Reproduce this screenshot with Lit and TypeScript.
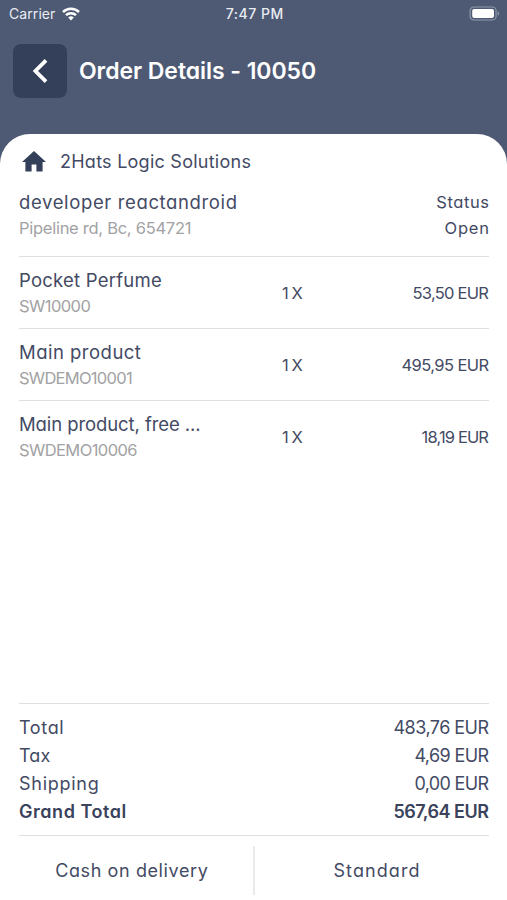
import { LitElement, html, css } from "lit";
import { customElement } from "lit/decorators.js";
import { styleMap } from "lit/directives/style-map.js";

/** A label together with its tracking in pixels. */
type Label = [text: string, tracking: number];

interface Product { name: Label; sku: Label; price: Label; }
interface Amount { label: Label; value: Label; grand?: boolean; }

const products: Product[] = [
  { name: ["Pocket Perfume", 0.23], sku: ["SW10000", -0.56], price: ["53,50 EUR", -0.72] },
  { name: ["Main product", 0.48], sku: ["SWDEMO10001", -0.72], price: ["495,95 EUR", -0.6] },
  { name: ["Main product, free ...", -0.09], sku: ["SWDEMO10006", -0.58], price: ["18,19 EUR", -0.86] },
];

const amounts: Amount[] = [
  { label: ["Total", 0.65], value: ["483,76 EUR", -0.54] },
  { label: ["Tax", 0.1], value: ["4,69 EUR", -0.63] },
  { label: ["Shipping", 0.72], value: ["0,00 EUR", -0.67] },
  { label: ["Grand Total", 0.55], value: ["567,64 EUR", -0.5], grand: true },
];

const label = ([text, tracking]: Label, cls = "") => html`<span
  class="label ${cls}"
  style=${styleMap({ letterSpacing: `${tracking}px`, marginRight: `${-tracking}px` })}
>${text}</span>`;

@customElement("app-root")
export class AppRoot extends LitElement {
  static styles = css`
    :host {
      display: flex;
      flex-direction: column;
      box-sizing: border-box;
      height: 900px;
      background: #4e5a74;
      color: #434a64;
      font-family: Inter, "Open Sans", sans-serif;
      font-feature-settings: "cv11";
      font-size: 18px;
      line-height: 26px;
    }
    .label { white-space: pre; }
    .status-bar {
      display: grid;
      grid-template-columns: 1fr auto 1fr;
      align-items: center;
      height: 27px;
      padding: 0 7px 0 9px;
      color: #e9ecf2;
      font-size: 14px;
      font-feature-settings: normal;
    }
    .carrier { display: flex; align-items: center; gap: 7px; }
    .time { font-weight: 500; }
    .battery { justify-self: end; }
    svg { display: block; flex: none; }
    .title-bar {
      display: flex;
      align-items: center;
      gap: 12px;
      height: 107px;
      box-sizing: border-box;
      padding: 0 13px 19px;
      color: #fff;
    }
    .back {
      display: grid;
      place-items: center;
      width: 54px;
      height: 54px;
      padding: 0;
      border: 0;
      border-radius: 8px;
      background: #344059;
    }
    h1 { margin: 0; font-size: 23px; font-weight: 600; line-height: 30px; }
    .sheet {
      flex: 1;
      display: flex;
      flex-direction: column;
      padding: 14px 18px 0 19px;
      border-radius: 30px 30px 0 0;
      background: #fff;
    }
    .store { display: flex; align-items: center; gap: 14px; height: 27px; padding-left: 3px; }
    .customer {
      display: flex;
      justify-content: space-between;
      height: 67px;
      margin-top: 14px;
      border-bottom: 1px solid #dedfe2;
    }
    .stack { display: flex; flex-direction: column; }
    .end { align-items: flex-end; }
    .name { font-size: 18.5px; }
    .sku { font-size: 16.5px; color: #a2a2a4; }
    .small { font-size: 16.5px; }
    .product {
      display: grid;
      grid-template-columns: 263px 1fr auto;
      align-items: center;
      height: 71px;
      border-bottom: 1px solid #dedfe2;
    }
    .product:last-of-type { border-bottom-color: transparent; }
    .product .stack { padding-top: 1px; }
    .amounts {
      margin-top: auto;
      padding: 10px 0 9px;
      border: solid #dedfe2;
      border-width: 1px 0;
    }
    .amount { display: flex; justify-content: space-between; height: 28px; line-height: 28px; }
    .grand { font-weight: 600; color: #3a425c; }
    .methods { display: flex; align-items: center; height: 64px; }
    .method { flex: 1; display: flex; justify-content: center; padding: 6px 9px 0 0; }
    .rule + .method { padding: 6px 0 0 9px; }
    .rule { width: 2px; height: 49px; margin-top: 4px; background: #e9eaec; }
  `;

  render() {
    return html`
      <div class="status-bar">
        <div class="carrier">
          ${label(["Carrier", 0.08])}
          <svg width="18" height="14" viewBox="0 0 18 14" fill="none" stroke="#fff" stroke-width="2.5">
            <path d="M1 5a11.4 11.4 0 0 1 16 0M4 8.2a7.1 7.1 0 0 1 10 0" />
            <path d="M9 13.4 6.2 10.6a4 4 0 0 1 5.6 0Z" fill="#fff" stroke="none" />
          </svg>
        </div>
        ${label(["7:47 PM", 0.52], "time")}
        <svg class="battery" width="31" height="15" viewBox="0 0 31 15">
          <rect x="1.1" y="1" width="26" height="13" rx="3.8" fill="none" stroke="#8f98aa" stroke-width="1.2" />
          <rect x="3.2" y="3.1" width="21.8" height="8.8" rx="1.8" fill="#fff" />
          <path d="M28.6 5.3c2.2.8 2.2 3.6 0 4.4Z" fill="#8f98aa" />
        </svg>
      </div>
      <header class="title-bar">
        <button class="back" aria-label="Back">
          <svg width="20" height="26" viewBox="0 0 20 26" fill="none" stroke="#fff" stroke-width="3.8">
            <path d="M16 2.3 5.4 13 16 23.7" />
          </svg>
        </button>
        <h1>${label(["Order Details - 10050", -0.06])}</h1>
      </header>
      <main class="sheet">
        <div class="store">
          <svg width="24" height="21" viewBox="0 0 24 21" fill="#344059">
            <path d="M12 0 0 11h3.4v9.4h6.2v-6.8h4.8v6.8h6.2V11H24Z" />
          </svg>
          ${label(["2Hats Logic Solutions", 0.25])}
        </div>
        <section class="customer">
          <div class="stack">
            ${label(["developer reactandroid", 0.63], "name")}
            ${label(["Pipeline rd, Bc, 654721", -0.27], "sku")}
          </div>
          <div class="stack end">
            ${label(["Status", 0.6], "small")}
            ${label(["Open", 0.8], "small")}
          </div>
        </section>
        ${products.map((p) => html`
          <section class="product">
            <div class="stack">${label(p.name, "name")}${label(p.sku, "sku")}</div>
            ${label(["1 X", -0.9], "small")}
            ${label(p.price, "small")}
          </section>
        `)}
        <div class="amounts">
          ${amounts.map((a) => html`
            <div class="amount ${a.grand ? "grand" : ""}">${label(a.label)}${label(a.value)}</div>
          `)}
        </div>
        <footer class="methods">
          <div class="method">${label(["Cash on delivery", 0.6])}</div>
          <div class="rule"></div>
          <div class="method">${label(["Standard", 1.08])}</div>
        </footer>
      </main>
    `;
  }
}
